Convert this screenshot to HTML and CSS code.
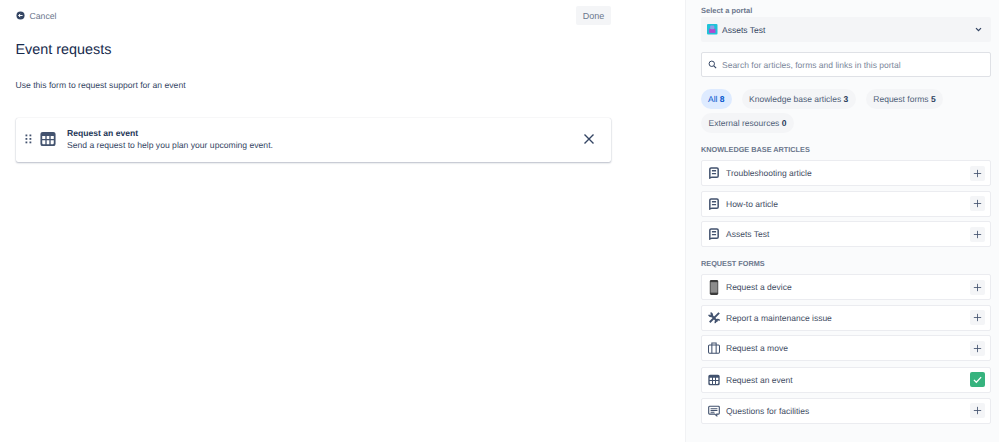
FILE: index.html
```html
<!DOCTYPE html>
<html lang="en">
<head>
<meta charset="utf-8">
<title>Event requests</title>
<link rel="stylesheet" href="styles.css">
</head>
<body>
<svg class="defs" width="0" height="0" aria-hidden="true">
  <symbol id="i-table" viewBox="0 0 18 18"><path fill="#42526e" fill-rule="evenodd" d="M3 1h12a2.500 2.500 0 0 1 2.500 2.500v11A2.500 2.500 0 0 1 15 17H3A2.500 2.500 0 0 1 .5 14.500v-11A2.500 2.500 0 0 1 3 1zM2.500 5.500v3.500h3.500V5.500zm5 0v3.500h3V5.500zm4.500 0v3.500h3.500V5.500zM2.500 10.500v2.700c0 1 .5 1.800 1.500 1.800h2v-4.500zm5 0v4.500h3v-4.500zm4.500 0v4.500h2c1 0 1.500-.8 1.500-1.800v-2.700z"/></symbol>
  <symbol id="i-article" viewBox="0 0 12 14"><path fill="none" stroke="#42526e" stroke-width="1.800" d="M2.500 1h7a1.500 1.500 0 0 1 1.500 1.500v8a1.500 1.500 0 0 1-1.500 1.500h-6L1 13V2.500A1.500 1.500 0 0 1 2.500 1z"/><path fill="#42526e" d="M3.500 3.500h5v1.600h-5zM3.500 7h5v1.600h-5z"/></symbol>
  <symbol id="i-plus" viewBox="0 0 16 16"><path fill="none" stroke="#42526e" stroke-width="1.500" d="M8 1.500v13M1.500 8h13"/></symbol>
</svg>
<div class="page">
  <main class="editor">
    <div class="topbar">
      <a class="cancel">
        <svg class="cancel-icon" viewBox="0 0 10 10"><circle cx="5" cy="5" r="4.500" fill="#344563"/><path fill="none" stroke="#fff" stroke-width="1.100" d="M7.300 5H3M4.700 3.200 2.900 5l1.800 1.800"/></svg>
        <span>Cancel</span>
      </a>
      <button class="done">Done</button>
    </div>
    <h1 class="title">Event requests</h1>
    <p class="desc">Use this form to request support for an event</p>
    <div class="card">
      <svg class="grip" viewBox="0 0 7 10"><g fill="#42526e"><rect x="0.500" y="0.500" width="1.800" height="1.800"/><rect x="4.500" y="0.500" width="1.800" height="1.800"/><rect x="0.500" y="4" width="1.800" height="1.800"/><rect x="4.500" y="4" width="1.800" height="1.800"/><rect x="0.500" y="7.500" width="1.800" height="1.800"/><rect x="4.500" y="7.500" width="1.800" height="1.800"/></g></svg>
      <svg class="card-icon"><use href="#i-table"/></svg>
      <div class="card-text">
        <div class="card-title">Request an event</div>
        <div class="card-sub">Send a request to help you plan your upcoming event.</div>
      </div>
      <svg class="close" viewBox="0 0 12 12"><path fill="none" stroke="#344563" stroke-width="1.400" d="M1.500 1.500l9 9M10.500 1.500l-9 9"/></svg>
    </div>
  </main>
  <aside class="panel">
    <div class="label">Select a portal</div>
    <div class="select">
      <svg class="portal-icon" viewBox="0 0 10 10"><rect width="10" height="10" rx="1" fill="#1fc3d8"/><path fill="#b04ad0" d="M2 4.500h6V8.500H2z"/><rect x="3" y="1.500" width="4" height="3.500" rx="1" fill="#8f9ee8"/></svg>
      <span class="select-text">Assets Test</span>
      <svg class="chev" viewBox="0 0 8 6"><path fill="none" stroke="#344563" stroke-width="1.500" d="M1 1.300 4 4.300l3-3"/></svg>
    </div>
    <div class="search">
      <svg class="search-icon" viewBox="0 0 10 10"><circle cx="4.200" cy="4.200" r="3" fill="none" stroke="#344563" stroke-width="1.100"/><path stroke="#344563" stroke-width="1.200" d="M6.500 6.500 9 9"/></svg>
      <span>Search for articles, forms and links in this portal</span>
    </div>
    <div class="tabs">
      <span class="tab active">All <b>8</b></span>
      <span class="tab">Knowledge base articles <b>3</b></span>
      <span class="tab">Request forms <b>5</b></span>
      <span class="tab">External resources <b>0</b></span>
    </div>
    <h2 class="section first">KNOWLEDGE BASE ARTICLES</h2>
    <div class="list">
      <div class="row"><svg class="row-icon article"><use href="#i-article"/></svg><span class="row-text">Troubleshooting article</span><span class="add"><svg><use href="#i-plus"/></svg></span></div>
      <div class="row"><svg class="row-icon article"><use href="#i-article"/></svg><span class="row-text">How-to article</span><span class="add"><svg><use href="#i-plus"/></svg></span></div>
      <div class="row"><svg class="row-icon article"><use href="#i-article"/></svg><span class="row-text">Assets Test</span><span class="add"><svg><use href="#i-plus"/></svg></span></div>
    </div>
    <h2 class="section">REQUEST FORMS</h2>
    <div class="list">
      <div class="row"><svg class="row-icon device" viewBox="0 0 10 16"><rect x="0.500" y="0" width="9" height="16" rx="1.500" fill="#3c3c3c"/><rect x="1.300" y="2.300" width="7.400" height="11.200" fill="#8c8c8c"/></svg><span class="row-text">Request a device</span><span class="add"><svg><use href="#i-plus"/></svg></span></div>
      <div class="row"><svg class="row-icon" viewBox="0 0 14 14"><g fill="none" stroke="#42526e"><path stroke-width="2.200" d="M13 1 2 12"/><path stroke-width="2.400" d="M3 3l8 8"/><path stroke-width="1.800" d="M.8 3.200c.8 1.600 2 2.400 3.600 2M3 .8c1.500.6 2.300 2 2 3.600M8.600 13c-.4-2 .6-4 2.400-4.200 1-.1 2 .3 2.700 1.200"/></g></svg><span class="row-text">Report a maintenance issue</span><span class="add"><svg><use href="#i-plus"/></svg></span></div>
      <div class="row"><svg class="row-icon" viewBox="0 0 14 14"><g fill="none" stroke="#42526e" stroke-width="1.200"><rect x=".6" y="3.500" width="12.800" height="9.500" rx="1.200"/><path d="M4.500 3.500V13M9.500 3.500V13M4.500 3.500V1.200h5v2.300"/></g></svg><span class="row-text">Request a move</span><span class="add"><svg><use href="#i-plus"/></svg></span></div>
      <div class="row event"><svg class="row-icon"><use href="#i-table"/></svg><span class="row-text">Request an event</span><span class="add added"><svg viewBox="0 0 16 16"><path fill="none" stroke="#fff" stroke-width="1.800" d="M2.800 8.500 6.300 12l7-7.500"/></svg></span></div>
      <div class="row"><svg class="row-icon" viewBox="0 0 14 14"><path fill="none" stroke="#42526e" stroke-width="1.300" d="M1.800 1.500h10.400a1 1 0 0 1 1 1v7.200a1 1 0 0 1-1 1h-2v2l-2.400-2H1.800a1 1 0 0 1-1-1V2.500a1 1 0 0 1 1-1z"/><path fill="none" stroke="#42526e" stroke-width="1.200" d="M3 4.500h8M3 6.500h8M3 8.500h4.500"/></svg><span class="row-text">Questions for facilities</span><span class="add"><svg><use href="#i-plus"/></svg></span></div>
    </div>
  </aside>
</div>
</body>
</html>
```

FILE: styles.css
```css
* { box-sizing: border-box; }
html, body { margin: 0; height: 100%; overflow: hidden; }
body { font-family: "Liberation Sans", Arial, sans-serif; color: #172b4d; background: #fff; text-rendering: geometricPrecision; }
.defs { position: absolute; }
.page { display: flex; height: 442px; }
.editor { width: 685px; padding: 6px 74px 0 15.500px; flex: none; }
.topbar { display: flex; justify-content: space-between; align-items: center; height: 19px; }
.cancel { display: flex; align-items: center; gap: 5px; font-size: 8.700px; color: #6b778c; }
.cancel-icon { width: 9px; height: 9px; }
.done { width: 35px; height: 19px; border: 0; border-radius: 2px; background: #f4f5f7; color: #6b778c; font: 9px "Liberation Sans", Arial, sans-serif; padding: 0; }
.title { margin: 15px 0 0; font-size: 14.400px; font-weight: 400; line-height: 20px; color: #172b4d; }
.desc { margin: 19px 0 0; font-size: 8.600px; line-height: 12px; color: #344563; }
.card { margin-top: 27px; height: 44px; display: flex; align-items: center; background: #fff; border-radius: 2px; box-shadow: 0 1px 2px rgba(9,30,66,.28), 0 0 1px rgba(9,30,66,.2); padding: 0 16px 2px 9.500px; }
.grip { width: 7px; height: 10px; flex: none; }
.card-icon { width: 16px; height: 16px; margin-left: 8px; flex: none; }
.card-text { margin-left: 11px; flex: 1; }
.card-title { font-size: 8.600px; font-weight: 700; line-height: 12px; color: #253858; }
.card-sub { font-size: 8.600px; line-height: 12px; color: #344563; }
.close { width: 12px; height: 12px; flex: none; }
.panel { width: 314px; flex: none; background: #fafbfc; border-left: 1px solid #f1f2f4; padding: 6px 8px 0 15px; }
.label { font-size: 7.500px; font-weight: 700; line-height: 9px; color: #6b778c; }
.select { margin-top: 2px; height: 25px; display: flex; align-items: center; background: #f4f5f7; border-radius: 2px; padding: 0 9px 0 6px; }
.portal-icon { width: 10.500px; height: 10.500px; flex: none; }
.select-text { margin-left: 4.500px; flex: 1; font-size: 8.500px; color: #344563; }
.chev { width: 7px; height: 5px; flex: none; }
.search { margin-top: 10px; height: 25px; display: flex; align-items: center; gap: 5px; background: #fff; border: 1.500px solid #dfe1e6; border-radius: 2px; padding: 0 6px; font-size: 8.500px; color: #7a869a; }
.search-icon { width: 9px; height: 9px; flex: none; }
.tabs { margin-top: 12px; display: flex; flex-wrap: wrap; gap: 4px 10px; }
.tab { height: 20px; line-height: 20px; padding: 0 7.500px; border-radius: 10px; background: #f4f5f7; font-size: 8.500px; color: #505f79; }
.tab b { color: #253858; }
.tab.active { background: #deebff; color: #0052cc; padding: 0 7px; }
.tab.active b { color: #0052cc; }
.section { margin: 12px 0 0; font-size: 7.300px; font-weight: 700; line-height: 9px; color: #6b778c; }
.section.first { margin-top: 12px; }
.list { margin-top: 6px; display: flex; flex-direction: column; gap: 4.500px; }
.row { height: 26px; display: flex; align-items: center; background: #fff; border: 1px solid #ebecf0; border-radius: 2px; padding: 0 5px 0 6px; }
.row.event { margin-top: 1px; height: 26.500px; }
.row-icon { width: 12px; height: 12px; flex: none; }
.row-icon.article { width: 10px; height: 12px; margin: 0 1px; }
.row-icon.device { height: 15px; }
.row-text { margin-left: 6px; flex: 1; font-size: 8.500px; color: #3f4c63; }
.add { width: 15px; height: 15px; border-radius: 2px; background: #f4f5f7; display: flex; align-items: center; justify-content: center; flex: none; }
.add svg { width: 9px; height: 9px; }
.add.added { background: #36b37e; }
.add.added svg { width: 11px; height: 11px; }
```
